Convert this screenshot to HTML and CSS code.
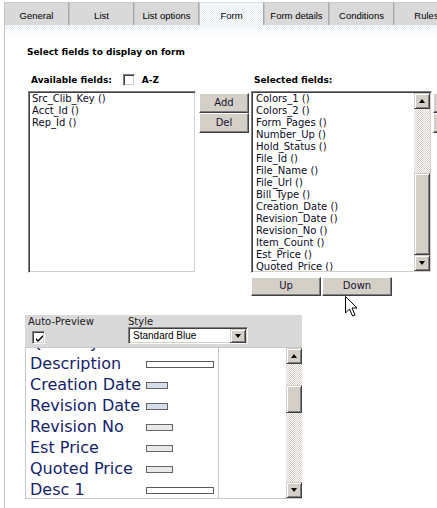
FILE: index.html
```html
<!DOCTYPE html>
<html>
<head>
<meta charset="utf-8">
<link rel="stylesheet" href="styles.css">
</head>
<body>
<div class="page">
  <div class="tabs">
    <div class="tab">General</div>
    <div class="tab">List</div>
    <div class="tab">List options</div>
    <div class="tab active">Form</div>
    <div class="tab">Form details</div>
    <div class="tab">Conditions</div>
    <div class="tab">Rules</div>
  </div>
  <div class="content">
    <div class="heading">Select fields to display on form</div>
    <div class="fields">
      <div class="col col-avail">
        <div class="label">Available fields:<span class="cb cb-az"></span>A-Z</div>
        <div class="listbox avail">
          <div class="item">Src_Clib_Key ()</div>
          <div class="item">Acct_Id ()</div>
          <div class="item">Rep_Id ()</div>
        </div>
      </div>
      <div class="col col-btns">
        <div class="btn btn-side">Add</div>
        <div class="btn btn-side">Del</div>
      </div>
      <div class="col col-sel">
        <div class="label">Selected fields:</div>
        <div class="listbox sel">
          <div class="items">
            <div class="item">Colors_1 ()</div>
            <div class="item">Colors_2 ()</div>
            <div class="item">Form_Pages ()</div>
            <div class="item">Number_Up ()</div>
            <div class="item">Hold_Status ()</div>
            <div class="item">File_Id ()</div>
            <div class="item">File_Name ()</div>
            <div class="item">File_Url ()</div>
            <div class="item">Bill_Type ()</div>
            <div class="item">Creation_Date ()</div>
            <div class="item">Revision_Date ()</div>
            <div class="item">Revision_No ()</div>
            <div class="item">Item_Count ()</div>
            <div class="item">Est_Price ()</div>
            <div class="item">Quoted_Price ()</div>
          </div>
          <div class="vscroll">
            <div class="sb-btn"><span class="tri-up"></span></div>
            <div class="sb-track"><div class="sb-thumb thumb-sel"></div></div>
            <div class="sb-btn"><span class="tri-down"></span></div>
          </div>
        </div>
        <div class="updown">
          <div class="btn btn-ud">Up</div>
          <div class="btn btn-ud">Down</div>
        </div>
      </div>
      <div class="col col-btns col-extra">
        <div class="btn btn-side">&nbsp;</div>
        <div class="btn btn-side">&nbsp;</div>
      </div>
    </div>

    <div class="preview">
      <div class="pv-head">
        <div class="pv-col pv-col1">
          <div class="pv-label">Auto-Preview</div>
          <div class="cb cb-auto">
            <svg width="9" height="9" viewBox="0 0 9 9"><path d="M1 4 L3 6 L8 1 L8 3 L3 8 L1 6 Z" fill="#000"/></svg>
          </div>
        </div>
        <div class="pv-col">
          <div class="pv-label">Style</div>
          <div class="select">
            <span class="select-text">Standard Blue</span>
            <div class="sb-btn select-btn"><span class="tri-down"></span></div>
          </div>
        </div>
      </div>
      <div class="pv-box">
        <div class="pv-list">
          <div class="pv-inner">
            <div class="pv-row"><span class="pv-name">Quantity</span><span class="bar bar-long"></span></div>
            <div class="pv-row"><span class="pv-name">Description</span><span class="bar bar-long"></span></div>
            <div class="pv-row"><span class="pv-name">Creation Date</span><span class="bar bar-date"></span></div>
            <div class="pv-row"><span class="pv-name">Revision Date</span><span class="bar bar-date"></span></div>
            <div class="pv-row"><span class="pv-name">Revision No</span><span class="bar bar-num"></span></div>
            <div class="pv-row"><span class="pv-name">Est Price</span><span class="bar bar-num"></span></div>
            <div class="pv-row"><span class="pv-name">Quoted Price</span><span class="bar bar-num"></span></div>
            <div class="pv-row"><span class="pv-name">Desc 1</span><span class="bar bar-long"></span></div>
          </div>
        </div>
        <div class="pv-mid"></div>
        <div class="vscroll pv-scroll">
          <div class="sb-btn"><span class="tri-up"></span></div>
          <div class="sb-track"><div class="sb-thumb thumb-pv"></div></div>
          <div class="sb-btn"><span class="tri-down"></span></div>
        </div>
      </div>
    </div>
  </div>
  <svg class="cursor" width="13" height="22" viewBox="0 0 13 22">
    <path d="M0.5 0.5 L0.5 17 L4.5 13 L7.5 20 L10 19 L7 12 L12 12 Z" fill="#fff" stroke="#000" stroke-width="1" stroke-linejoin="miter"/>
  </svg>
</div>
</body>
</html>
```
FILE: styles.css
```css
html, body {
  margin: 0;
  padding: 0;
  overflow: hidden;
  background: #fff;
}
body {
  width: 437px;
  height: 508px;
  font-family: "DejaVu Sans", Verdana, sans-serif;
  font-size: 10px;
  color: #000;
}
.page {
  position: relative;
  margin-left: 4px;
  padding-top: 2px;
}

/* tabs */
.tabs {
  display: flex;
  height: 23px;
}
.tab {
  flex: none;
  width: 65px;
  height: 23px;
  box-sizing: border-box;
  background: #d9d9d9;
  border-top: 1px solid #cbcbcb;
  border-left: 1px solid #c4c4c4;
  border-right: 1px solid #a8a8a8;
  font-family: "Liberation Sans", Arial, sans-serif;
  font-size: 9.5px;
  text-align: center;
  padding-top: 4px;
  line-height: 17px;
  white-space: nowrap;
}
.tab.active {
  background: repeating-conic-gradient(#e6ecf3 0 25%, #fdfdfe 0 50%) 0 0 / 2px 2px;
  border-top-color: #e2e2e2;
}

/* content */
.content {
  border-left: 1px solid #c2c2c2;
  height: 483px;
  background:
    linear-gradient(to bottom, rgba(255,255,255,0) 0, rgba(255,255,255,0.6) 6px, #fff 13px),
    repeating-conic-gradient(#e3e9f1 0 25%, #fff 0 50%) 0 0 / 2px 2px;
  overflow: hidden;
}
.heading {
  margin: 21px 0 0 22px;
  font-weight: bold;
  font-size: 9px;
  line-height: 12px;
}
.fields {
  display: flex;
  align-items: flex-start;
  margin-top: 16px;
  padding-left: 23px;
}
.col {
  flex: none;
}
.label {
  display: flex;
  align-items: center;
  height: 12px;
  line-height: 12px;
  margin-bottom: 5px;
  padding-left: 3px;
  font-weight: bold;
  font-size: 9px;
  white-space: nowrap;
}
.cb {
  display: inline-block;
  box-sizing: border-box;
  background: #fff;
  border: 1px solid;
  border-color: #808080 #fff #fff #808080;
  box-shadow: inset 1px 1px 0 #404040, inset -1px -1px 0 #d4d0c8;
}
.cb-az {
  width: 12px;
  height: 12px;
  margin: 0 7px 0 11px;
}

.listbox {
  box-sizing: border-box;
  height: 182px;
  background: #fff;
  border: 1px solid;
  border-color: #808080 #fff #fff #808080;
  box-shadow: inset 1px 1px 0 #404040, inset -1px -1px 0 #d4d0c8;
  padding: 1px;
  overflow: hidden;
}
.avail {
  width: 168px;
  padding-left: 3px;
}
.item {
  font-size: 10px;
  line-height: 12px;
  white-space: nowrap;
  color: #0a0a1e;
}
.sel {
  width: 181px;
  display: flex;
}
.sel .items {
  flex: 1;
  padding-left: 3px;
  overflow: hidden;
  height: 178px;
}

/* buttons */
.btn {
  box-sizing: border-box;
  background: #d4d0c8;
  border: 1px solid;
  border-color: #fff #404040 #404040 #fff;
  box-shadow: inset -1px -1px 0 #808080;
  text-align: center;
  font-size: 10px;
  line-height: 17px;
  color: #1a1030;
}
.col-btns {
  margin-left: 3px;
  padding-top: 19px;
}
.btn-side {
  width: 50px;
  height: 20px;
}
.col-sel {
  margin-left: 2px;
}
.col-extra {
  margin-left: 1px;
}
.updown {
  display: flex;
  gap: 1px;
  margin-top: 4px;
}
.btn-ud {
  width: 70px;
  height: 19px;
  line-height: 16px;
}

/* scrollbars */
.vscroll {
  flex: none;
  width: 16px;
  display: flex;
  flex-direction: column;
}
.sb-btn {
  flex: none;
  box-sizing: border-box;
  width: 16px;
  height: 16px;
  background: #d4d0c8;
  border: 1px solid;
  border-color: #d4d0c8 #404040 #404040 #d4d0c8;
  box-shadow: inset 1px 1px 0 #fff, inset -1px -1px 0 #808080;
  display: flex;
  align-items: center;
  justify-content: center;
}
.tri-up, .tri-down {
  width: 0;
  height: 0;
  border-left: 3.5px solid transparent;
  border-right: 3.5px solid transparent;
}
.tri-up {
  border-bottom: 4px solid #000;
  margin-top: -1px;
}
.tri-down {
  border-top: 4px solid #000;
}
.sb-track {
  flex: 1;
  display: flex;
  flex-direction: column;
  background: repeating-conic-gradient(#d4d0c8 0 25%, #fff 0 50%) 0 0 / 2px 2px;
}
.sb-thumb {
  box-sizing: border-box;
  width: 16px;
  background: #d4d0c8;
  border: 1px solid;
  border-color: #d4d0c8 #404040 #404040 #d4d0c8;
  box-shadow: inset 1px 1px 0 #fff, inset -1px -1px 0 #808080;
}
.thumb-sel {
  height: 82px;
  margin-top: auto;
}
.thumb-pv {
  height: 28px;
  margin-top: 21px;
}

/* preview */
.preview {
  margin: 19px 0 0 20px;
  width: 277px;
}
.pv-head {
  display: flex;
  box-sizing: border-box;
  height: 32px;
  padding-top: 1px;
  background: #d9d9d9;
}
.pv-col1 {
  width: 100px;
  padding-left: 3px;
}
.pv-label {
  font-size: 10px;
  line-height: 11px;
  color: #1a1a1a;
}
.cb-auto {
  width: 13px;
  height: 13px;
  margin: 4px 0 0 4px;
  position: relative;
}
.cb-auto svg {
  position: absolute;
  left: 2px;
  top: 2px;
}
.select {
  box-sizing: border-box;
  width: 120px;
  height: 17px;
  display: flex;
  align-items: center;
  background: #fff;
  border: 1px solid;
  border-color: #808080 #fff #fff #808080;
  box-shadow: inset 1px 1px 0 #404040, inset -1px -1px 0 #d4d0c8;
  padding: 1px;
}
.select-text {
  flex: 1;
  padding-left: 3px;
  font-family: "Liberation Sans", Arial, sans-serif;
  font-size: 10px;
  line-height: 13px;
}
.select-btn {
  height: 14px;
}
.pv-box {
  display: flex;
  box-sizing: border-box;
  height: 152px;
  border: 1px solid #c8c8c8;
  border-right: none;
  background: #fff;
}
.pv-list {
  flex: none;
  box-sizing: border-box;
  width: 193px;
  border-right: 1px solid #c8c8c8;
  overflow: hidden;
}
.pv-inner {
  margin-top: -16px;
}
.pv-row {
  display: flex;
  align-items: center;
  height: 21px;
  padding-left: 4px;
}
.pv-name {
  flex: none;
  width: 116px;
  font-size: 16px;
  line-height: 21px;
  color: #15246a;
  white-space: nowrap;
}
.bar {
  flex: none;
  box-sizing: border-box;
  height: 7px;
  border: 1px solid #5a5a5a;
  margin-top: 1px;
}
.bar-long {
  width: 68px;
  background: #fff;
}
.bar-date {
  width: 22px;
  background: #d5deeb;
  border-color: #666;
}
.bar-num {
  width: 27px;
  background: #e9e9e9;
  border-color: #666;
}
.pv-mid {
  flex: 1;
}
.pv-scroll {
  height: 150px;
}

.cursor {
  position: absolute;
  left: 341px;
  top: 296px;
}
```
